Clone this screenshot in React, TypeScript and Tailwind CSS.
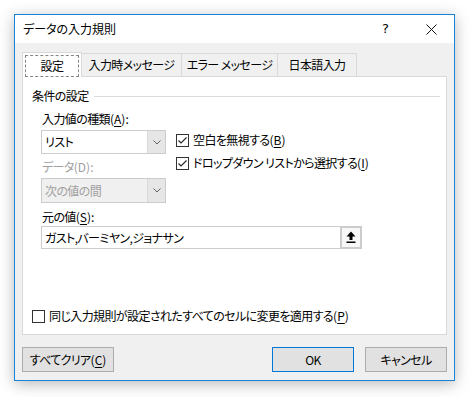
import { ReactNode } from 'react';

const font = "[font-family:'Noto_Sans_CJK_JP','Noto_Sans',sans-serif] [font-feature-settings:'palt']";

const Key = ({ k }: { k: string }) => (
  <span className="tracking-normal">
    (<span className="underline underline-offset-2">{k}</span>)
  </span>
);

const CheckBox = ({ checked, children }: { checked?: boolean; children: ReactNode }) => (
  <div className="flex items-center h-[16px] gap-[4px]">
    <div className="w-[13px] h-[13px] border border-[#333333] bg-white flex items-center justify-center shrink-0">
      {checked && (
        <svg width="11" height="11" viewBox="0 0 11 11">
          <path d="M1.5 5.5 L4 8 L9.5 2.5" fill="none" stroke="#222" strokeWidth="1.1" />
        </svg>
      )}
    </div>
    <span className="leading-[16px]">{children}</span>
  </div>
);

const Chevron = ({ color = '#606060' }: { color?: string }) => (
  <svg width="8" height="5" viewBox="0 0 8 5">
    <path d="M0.5 0.5 L4 4 L7.5 0.5" fill="none" stroke={color} strokeWidth="1" />
  </svg>
);

const Select = ({ value, disabled }: { value: string; disabled?: boolean }) => (
  <div
    className={`flex w-[125px] border border-[#cccccc] ${
      disabled ? 'h-[25px] bg-[#f0f0f0] text-[#a0a0a0]' : 'h-[24px] bg-white'
    }`}
  >
    <span className="flex-1 pl-[3px] flex items-center">{value}</span>
    <div className="w-[18px] bg-[#e6e6e6] border-l border-[#d9d9d9] flex items-center justify-center">
      <Chevron />
    </div>
  </div>
);

const Tab = ({ label, active, w }: { label: string; active?: boolean; w: string }) =>
  active ? (
    <div className={`${w} h-[25px] bg-white border border-b-0 border-[#d9d9d9] p-[2px] pb-0 relative z-10 -mb-px`}>
      <div className="h-full border border-dashed border-[#888] flex items-center justify-center">{label}</div>
    </div>
  ) : (
    <div className={`${w} h-[23px] bg-[#f0f0f0] border border-b-0 border-l-0 border-[#d9d9d9] flex items-center justify-center`}>
      {label}
    </div>
  );

const Button = ({ children, w, primary }: { children: ReactNode; w: string; primary?: boolean }) => (
  <div
    className={`${w} h-[25px] bg-[#e1e1e1] border flex items-center justify-center ${
      primary ? 'border-[#0078d7]' : 'border-[#adadad]'
    }`}
  >
    {children}
  </div>
);

export default function App() {
  return (
    <div className={`w-[471px] h-[397px] bg-white pt-[14px] pl-[14px] text-[12px] text-black ${font}`}>
      <div className="w-[441px] h-[367px] border border-[#1883d7] flex flex-col shadow-[0_3px_14px_rgba(0,0,0,0.28)]">
        {/* Title bar */}
        <div className="h-[28px] bg-white flex items-center pl-[8px]">
          <span className="flex-1">データの入力規則</span>
          <div className="w-[45px] h-full flex items-center justify-center text-[13px] [font-family:'DejaVu_Sans',sans-serif]">?</div>
          <div className="w-[46px] h-full flex items-center justify-center">
            <svg width="11" height="11" viewBox="0 0 11 11">
              <path d="M0.5 0.5 L10.5 10.5 M10.5 0.5 L0.5 10.5" stroke="#111" strokeWidth="1" />
            </svg>
          </div>
        </div>

        {/* Body */}
        <div className="flex-1 bg-[#f0f0f0] px-[7px] pt-[8px] pb-[8px] flex flex-col tracking-[-0.6px]">
          <div className="flex items-end h-[25px]">
            <Tab label="設定" active w="w-[60px]" />
            <Tab label="入力時メッセージ" w="w-[100px]" />
            <Tab label="エラー メッセージ" w="w-[96px]" />
            <Tab label="日本語入力" w="w-[79px]" />
          </div>

          <div className="h-[259px] bg-white border border-[#d9d9d9] pt-[11px] pl-[9px] pr-[6px] pb-[10px] flex flex-col">
            <div className="flex items-center h-[16px]">
              <span>条件の設定</span>
              <div className="flex-1 h-px bg-[#dcdcdc] ml-[5px]" />
            </div>

            <div className="ml-[9px] mt-[7px] flex">
              <div className="w-[125px] flex flex-col">
                <span className="h-[16px] leading-[16px] pl-[1px]">
                  入力値の種類<Key k="A" />:
                </span>
                <div className="mt-[3px]">
                  <Select value="リスト" />
                </div>
                <span className="h-[16px] leading-[16px] mt-[5px] pl-[1px] text-[#a0a0a0]">
                  データ<span className="tracking-normal">(D)</span>:
                </span>
                <div className="mt-[3px]">
                  <Select value="次の値の間" disabled />
                </div>
              </div>
              <div className="ml-[10px] pt-[21px] flex flex-col gap-[7px]">
                <CheckBox checked>
                  空白を無視する<Key k="B" />
                </CheckBox>
                <CheckBox checked>
                  ドロップダウン リストから選択する<Key k="I" />
                </CheckBox>
              </div>
            </div>

            <span className="ml-[10px] mt-[6px] h-[16px] leading-[16px]">
              元の値<Key k="S" />:
            </span>
            <div className="ml-[9px] mt-[1px] w-[321px] h-[23px] border border-[#cccccc] flex">
              <span className="flex-1 pl-[3px] flex items-center">ガスト,バーミヤン,ジョナサン</span>
              <div className="w-[22px] -my-px -mr-px border-2 border-[#cccccc] bg-[#f7f7f7] flex items-center justify-center">
                <svg width="10" height="13" viewBox="0 0 10 13">
                  <polygon points="5,0.5 9.5,5.5 0.5,5.5" fill="#000" />
                  <rect x="3.5" y="5" width="3" height="4" fill="#000" />
                  <rect x="0.5" y="10.5" width="9" height="1.5" fill="#000" />
                </svg>
              </div>
            </div>

            <div className="mt-auto">
              <CheckBox>
                同じ入力規則が設定されたすべてのセルに変更を適用する<Key k="P" />
              </CheckBox>
            </div>
          </div>

          <div className="mt-[12px] flex items-center">
            <Button w="w-[92px]">
              すべてクリア<Key k="C" />
            </Button>
            <div className="flex-1" />
            <Button w="w-[82px]" primary>
              OK
            </Button>
            <div className="w-[11px]" />
            <Button w="w-[82px]">キャンセル</Button>
          </div>
        </div>
      </div>
    </div>
  );
}
